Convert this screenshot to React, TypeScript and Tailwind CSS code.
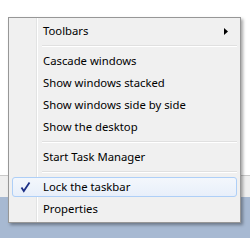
import React from "react";

type Item = { label?: string; sep?: boolean; submenu?: boolean; checked?: boolean };

const items: Item[] = [
  { label: "Toolbars", submenu: true },
  { sep: true },
  { label: "Cascade windows" },
  { label: "Show windows stacked" },
  { label: "Show windows side by side" },
  { label: "Show the desktop" },
  { sep: true },
  { label: "Start Task Manager" },
  { sep: true },
  { label: "Lock the taskbar", checked: true },
  { label: "Properties" },
];

function Check() {
  return (
    <svg width="12" height="12" viewBox="0 0 12 12">
      <path d="M2.5 6.5 L4.8 10 L10.5 1.5" fill="none" stroke="#1c2f86" strokeWidth="1.8" strokeLinejoin="miter" />
    </svg>
  );
}

function Arrow() {
  return (
    <svg width="4" height="7" viewBox="0 0 4 7">
      <path d="M0 0 L4 3.5 L0 7 Z" fill="#000" />
    </svg>
  );
}

export default function App() {
  return (
    <div className="relative flex h-[238px] w-[250px] flex-col overflow-hidden bg-white" style={{ fontFamily: '"Noto Sans", "Open Sans", sans-serif' }}>
      <div className="h-[175px] bg-white" />
      <div className="h-[22px] border-t border-[#c9c9c9] bg-[#efefef]" />
      <div className="flex-1 bg-[#a7b9d2]" />

      <div className="absolute left-[8px] top-[17px] w-[233px] border border-[#979797] bg-[#f0f0f0] px-[3px] py-[2px] shadow-[2px_2px_3px_rgba(0,0,0,0.35)]">
        <div className="absolute bottom-0 left-[27px] top-0 w-[2px] border-l border-[#e2e3e3] bg-white" />
        {items.map((it, i) =>
          it.sep ? (
            <div key={i} className="relative ml-[30px] flex h-[8px] flex-col justify-center">
              <div className="h-px bg-[#e0e0e0]" />
              <div className="h-px bg-white" />
            </div>
          ) : (
            <div key={i} className="relative flex h-[22px] items-center">
              <div
                className={
                  it.checked
                    ? "flex h-[20px] w-full items-center rounded-[3px] border border-[#aecff7] bg-gradient-to-b from-[#f3f7fc] to-[#e8effa]"
                    : "flex h-[20px] w-full items-center border border-transparent"
                }
              >
                <div className="flex w-[24px] shrink-0 items-center justify-center">
                  {it.checked && <Check />}
                </div>
                <span className="ml-[6px] flex-1 text-[11.3px] leading-none text-black">{it.label}</span>
                {it.submenu && (
                  <span className="mr-[8px] flex items-center">
                    <Arrow />
                  </span>
                )}
              </div>
            </div>
          )
        )}
      </div>
    </div>
  );
}
